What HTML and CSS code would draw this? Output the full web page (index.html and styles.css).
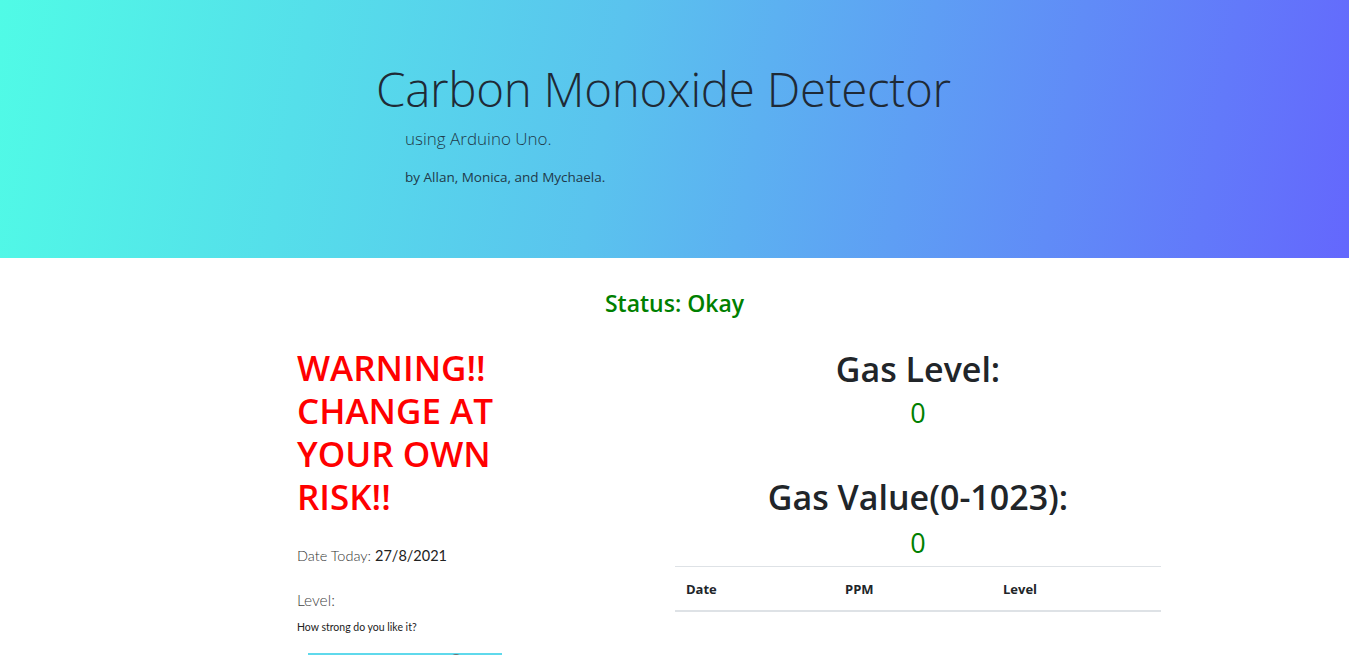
FILE: index.html
```html
<!DOCTYPE html>
<html lang="en">
<head>
<meta charset="utf-8">
<title>Carbon Monoxide Detector</title>
<link rel="stylesheet" href="styles.css">
</head>
<body>
<header class="hero">
  <div class="hero-inner">
    <h1 class="hero-title">Carbon Monoxide Detector</h1>
    <p class="hero-lead">using Arduino Uno.</p>
    <p class="hero-by">by Allan, Monica, and Mychaela.</p>
  </div>
</header>
<main class="content">
  <h3 class="status">Status: Okay</h3>
  <div class="columns">
    <section class="left-col">
      <h2 class="warning">WARNING!! CHANGE AT YOUR OWN RISK!!</h2>
      <p class="date">Date Today: <span class="date-val">27/8/2021</span></p>
      <p class="level-label">Level:</p>
      <p class="level-hint">How strong do you like it?</p>
      <div class="slider"><span class="thumb"></span></div>
    </section>
    <section class="right-col">
      <h2 class="gas-title">Gas Level:</h2>
      <div class="gas-val">0</div>
      <h2 class="gas-title gas-title-2">Gas Value(0-1023):</h2>
      <div class="gas-val gas-val-2">0</div>
      <table class="log">
        <thead>
          <tr><th class="col-date">Date</th><th class="col-ppm">PPM</th><th>Level</th></tr>
        </thead>
      </table>
    </section>
  </div>
</main>
</body>
</html>
```
FILE: styles.css
```css
* { box-sizing: border-box; }
html, body { margin: 0; padding: 0; }
body {
  font-family: "Open Sans", "Noto Sans", sans-serif;
  color: #212529;
  background: #fff;
  overflow: hidden;
  height: 655px;
}
.hero {
  height: 258px;
  background: linear-gradient(100deg, #50fbe6 0%, #5ac3ee 45%, #6467fd 100%);
  display: flex;
  justify-content: center;
}
.hero-inner {
  padding-top: 57px;
  width: 600px;
  margin-left: 3px;
}
.hero-title {
  margin: 0;
  font-weight: 300;
  font-size: 47.5px;
  line-height: 64px;
  color: #1f2a36;
  letter-spacing: -0.3px;
  white-space: nowrap;
}
.hero-lead {
  margin: 6px 0 0 29px;
  font-size: 17px;
  font-weight: 300;
  color: #1f3a4a;
  line-height: 24px;
}
.hero-by {
  margin: 16px 0 0 29px;
  font-size: 13.5px;
  color: #1f3a4a;
  line-height: 20px;
}
.content {
  padding-top: 28px;
}
.status {
  margin: 0;
  text-align: center;
  color: #008000;
  font-size: 23px;
  font-weight: 600;
  line-height: 34px;
}
.columns {
  display: flex;
  padding-left: 297px;
  margin-top: 26px;
}
.left-col {
  width: 378px;
}
.warning {
  margin: 0;
  width: 215px;
  color: #ff0000;
  font-size: 35px;
  font-weight: 600;
  line-height: 43px;
}
.date {
  margin: 27px 0 0;
  font-family: "Lato", sans-serif;
  font-size: 14.5px;
  font-weight: 300;
  color: #333;
  line-height: 22px;
}
.date-val { font-weight: 400; color: #222; }
.level-label {
  margin: 22px 0 0;
  font-family: "Lato", sans-serif;
  font-size: 15.5px;
  font-weight: 300;
  color: #444;
  line-height: 22px;
}
.level-hint {
  margin: 8px 0 0;
  font-family: "Lato", sans-serif;
  font-size: 10.5px;
  color: #222;
  line-height: 16px;
}
.slider {
  position: relative;
  margin: 18px 0 0 11px;
  width: 194px;
  height: 4px;
  background: #5fd9ec;
}
.thumb {
  position: absolute;
  left: 142px;
  top: 1px;
  width: 12px;
  height: 12px;
  border-radius: 50%;
  background: #6f6f6f;
}
.right-col {
  width: 486px;
  padding-top: 1px;
  display: flex;
  flex-direction: column;
  align-items: center;
}
.gas-title {
  margin: 0;
  font-size: 34px;
  font-weight: 600;
  line-height: 44px;
  color: #212529;
}
.gas-title-2 { margin-top: 41px; }
.gas-val {
  color: #008000;
  font-size: 27px;
  font-weight: 500;
  line-height: 42px;
  margin-top: 1px;
}
.gas-val-2 { margin-top: 3px; }
.log {
  width: 100%;
  margin-top: 2px;
  border-collapse: collapse;
}
.log th {
  text-align: left;
  font-size: 13px;
  font-weight: 700;
  padding: 13px 11px 12px;
  border-top: 1px solid #dee2e6;
  border-bottom: 2px solid #dee2e6;
}
.log .col-date { width: 159px; }
.log .col-ppm { width: 158px; }
```
